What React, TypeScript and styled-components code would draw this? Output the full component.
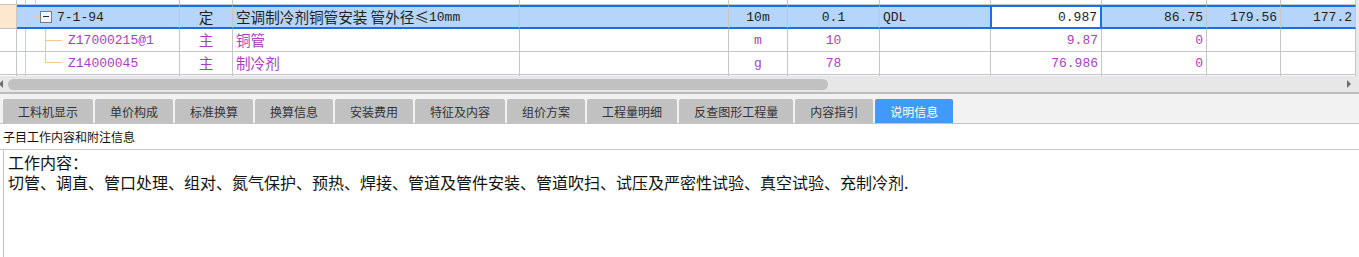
import React from "react";
import styled, { createGlobalStyle, css } from "styled-components";

const GlobalStyle = createGlobalStyle`
  html, body {
    margin: 0;
    padding: 0;
    background: #ffffff;
  }

  body {
    font-family: "Noto Sans CJK SC", sans-serif;
  }
`;

const COLUMNS =
  "17px 163px 53px 287px 209px 59px 92px 111px 111px 105px 74px 1fr";

const BLUE = "#1a6fe8";
const LINE = "#c6c6c6";
const PURPLE = "#a83fc2";
const TREE = "#f8c68a";

const TABS = [
  "工料机显示",
  "单价构成",
  "标准换算",
  "换算信息",
  "安装费用",
  "特征及内容",
  "组价方案",
  "工程量明细",
  "反查图形工程量",
  "内容指引",
  "说明信息",
];

type Align = "left" | "center" | "right";

export default function App() {
  return (
    <>
      <GlobalStyle />
      <Page>
        <GridViewport>
          <GridBody>
            {/* row scrolled mostly out of view */}
            <Row $height={23}>
              <RowHead />
              <Cell>
                <VLine $x={8} $top={0} $bottom={0} />
                <VLine $x={18} $top={0} $bottom={0} />
              </Cell>
              <Cell />
              <Cell />
              <Cell />
              <Cell />
              <Cell />
              <Cell />
              <Cell />
              <Cell />
              <Cell />
              <Cell />
            </Row>

            <Row $height={24} $background="#b5d5fa">
              <RowHead $current />
              <Cell $selected $pad={23}>
                <VLine $x={8} $top={-2} $bottom={-2} />
                <VLine $x={18} $top={-2} $height={11} />
                <HLine $x={18} $y={9} $width={5} />
                <Toggle />
                <span>7-1-94</span>
              </Cell>
              <Cell $selected $align="center">
                <Cjk>定</Cjk>
              </Cell>
              <Cell $selected $gap={0}>
                <Cjk>空调制冷剂铜管安装 管外径≤</Cjk>10mm
              </Cell>
              <Cell $selected />
              <Cell $selected $align="center">
                10m
              </Cell>
              <Cell $selected $align="center">
                0.1
              </Cell>
              <Cell $selected>QDL</Cell>
              <ActiveCell $selected $align="right">
                0.987
              </ActiveCell>
              <Cell $selected $align="right">
                86.75
              </Cell>
              <Cell $selected $align="right">
                179.56
              </Cell>
              <Cell $selected $align="right">
                177.2
              </Cell>
            </Row>

            <Row $height={23}>
              <RowHead />
              <Cell $tone="child" $pad={51}>
                <VLine $x={8} $top={0} $bottom={-1} />
                <VLine $x={28} $top={0} $bottom={-1} />
                <HLine $x={28} $y={11} $width={17} />
                Z17000215@1
              </Cell>
              <Cell $tone="child" $align="center">
                <Cjk>主</Cjk>
              </Cell>
              <Cell $tone="child">
                <Cjk>铜管</Cjk>
              </Cell>
              <Cell />
              <Cell $tone="child" $align="center">
                m
              </Cell>
              <Cell $tone="child" $align="center">
                10
              </Cell>
              <Cell />
              <Cell $tone="child" $align="right">
                9.87
              </Cell>
              <Cell $tone="child" $align="right">
                0
              </Cell>
              <Cell />
              <Cell />
            </Row>

            <Row $height={23}>
              <RowHead />
              <Cell $tone="child" $pad={51}>
                <VLine $x={8} $top={0} $bottom={-1} />
                <VLine $x={28} $top={0} $height={11} />
                <HLine $x={28} $y={10} $width={17} />
                Z14000045
              </Cell>
              <Cell $tone="child" $align="center">
                <Cjk>主</Cjk>
              </Cell>
              <Cell $tone="child">
                <Cjk>制冷剂</Cjk>
              </Cell>
              <Cell />
              <Cell $tone="child" $align="center">
                g
              </Cell>
              <Cell $tone="child" $align="center">
                78
              </Cell>
              <Cell />
              <Cell $tone="child" $align="right">
                76.986
              </Cell>
              <Cell $tone="child" $align="right">
                0
              </Cell>
              <Cell />
              <Cell />
            </Row>

            <Row $height={23} $background="#f3f7fd">
              <RowHead />
              <Cell>
                <VLine $x={8} $top={0} $bottom={0} />
              </Cell>
              <Cell />
              <Cell />
              <Cell />
              <Cell />
              <Cell />
              <Cell />
              <Cell />
              <Cell />
              <Cell />
              <Cell />
            </Row>
          </GridBody>
          <RightStrip />
        </GridViewport>

        <ScrollTrack>
          <ArrowLeft />
          <Thumb />
          <ArrowRight />
        </ScrollTrack>

        <TabBar>
          {TABS.map((tab, i) => (
            <Tab key={tab} $active={i === TABS.length - 1}>
              {tab}
            </Tab>
          ))}
        </TabBar>

        <InfoLabel>子目工作内容和附注信息</InfoLabel>

        <InfoBody>
          <p>工作内容：</p>
          <p>
            切管、调直、管口处理、组对、氮气保护、预热、焊接、管道及管件安装、管道吹扫、试压及严密性试验、真空试验、充制冷剂.
          </p>
        </InfoBody>
      </Page>
    </>
  );
}

const Page = styled.div`
  width: 1359px;
  height: 257px;
  overflow: hidden;

  display: flex;
  flex-direction: column;

  background: #ffffff;
`;

const GridViewport = styled.div`
  height: 76px;
  flex: none;
  overflow: hidden;

  display: flex;
`;

const GridBody = styled.div`
  flex: 1;
  margin-top: -18px;
`;

const RightStrip = styled.div`
  width: 3px;
  background: #e9e9e9;
`;

const Row = styled.div<{ $height: number; $background?: string }>`
  display: grid;
  grid-template-columns: ${COLUMNS};

  height: ${({ $height }) => $height}px;

  background: ${({ $background }) => $background || "#ffffff"};
`;

const RowHead = styled.div<{ $current?: boolean }>`
  box-sizing: border-box;

  border-right: 1px solid ${LINE};
  border-bottom: 1px solid ${LINE};

  background: ${({ $current }) => ($current ? "#fde7ce" : "#ffffff")};
`;

const Cell = styled.div<{
  $align?: Align;
  $selected?: boolean;
  $tone?: "child";
  $pad?: number;
  $gap?: number;
}>`
  position: relative;
  box-sizing: border-box;
  min-width: 0;

  display: flex;
  align-items: center;
  justify-content: ${({ $align }) =>
    $align === "right"
      ? "flex-end"
      : $align === "center"
      ? "center"
      : "flex-start"};
  gap: ${({ $gap }) => ($gap !== undefined ? $gap : 5)}px;

  padding: 0 3px 0 ${({ $pad }) => ($pad !== undefined ? $pad : 3)}px;

  border-right: 1px solid ${LINE};
  border-bottom: 1px solid ${LINE};

  overflow: hidden;
  white-space: pre;

  font-family: "Liberation Mono", "Noto Sans CJK SC", monospace;
  font-size: 13px;
  line-height: 1;
  color: ${({ $tone }) => ($tone === "child" ? PURPLE : "#1f1f1f")};

  ${({ $selected }) =>
    $selected &&
    css`
      border-top: 2px solid ${BLUE};
      border-bottom: 2px solid ${BLUE};
    `}
`;

const ActiveCell = styled(Cell)`
  background: #ffffff;

  border-right: 2px solid ${BLUE};
  box-shadow: -1px 0 0 ${BLUE}, inset 1px 0 0 ${BLUE};
`;

const Cjk = styled.span`
  font-family: "Noto Sans CJK SC", sans-serif;
  font-size: 14.6px;
  line-height: 1;
`;

const VLine = styled.span<{
  $x: number;
  $top: number;
  $bottom?: number;
  $height?: number;
}>`
  position: absolute;
  left: ${({ $x }) => $x}px;
  top: ${({ $top }) => $top}px;
  ${({ $bottom }) => ($bottom !== undefined ? `bottom: ${$bottom}px;` : "")}
  ${({ $height }) => ($height !== undefined ? `height: ${$height}px;` : "")}

  width: 1px;
  background: ${TREE};
`;

const HLine = styled.span<{ $x: number; $y: number; $width: number }>`
  position: absolute;
  left: ${({ $x }) => $x}px;
  top: ${({ $y }) => $y}px;

  width: ${({ $width }) => $width}px;
  height: 1px;
  background: ${TREE};
`;

const Toggle = styled.span`
  position: relative;
  box-sizing: border-box;
  flex: none;

  width: 12px;
  height: 12px;

  border: 1px solid #7c7c7c;
  background: #eef5ff;

  &::after {
    content: "";
    position: absolute;
    left: 2px;
    top: 4px;

    width: 6px;
    height: 1px;
    background: #2a2a2a;
  }
`;

const ScrollTrack = styled.div`
  height: 16px;
  flex: none;

  display: flex;
  align-items: center;

  padding-right: 8px;

  background: #e7e7e7;
  border-bottom: 2px solid #bababa;
`;

const ArrowLeft = styled.span`
  width: 0;
  height: 0;
  margin-left: -1px;

  border-top: 4px solid transparent;
  border-bottom: 4px solid transparent;
  border-right: 4px solid #6e6e6e;
`;

const Thumb = styled.span`
  width: 820px;
  height: 11px;
  margin-left: 5px;

  border-radius: 6px;
  background: #c1c1c1;
`;

const ArrowRight = styled.span`
  width: 0;
  height: 0;
  margin-left: auto;

  border-top: 4px solid transparent;
  border-bottom: 4px solid transparent;
  border-left: 4px solid #6e6e6e;
`;

const TabBar = styled.div`
  box-sizing: border-box;
  height: 30px;
  flex: none;

  display: flex;
  align-items: flex-end;
  gap: 2px;

  padding: 5px 0 0 3px;

  background: #f2f2f2;
  border-bottom: 1px solid #c4c4c4;
`;

const Tab = styled.div<{ $active?: boolean }>`
  height: 24px;

  display: flex;
  align-items: center;

  padding: 0 15px;

  border-radius: 2px 2px 0 0;

  font-size: 12px;
  color: ${({ $active }) => ($active ? "#ffffff" : "#333333")};
  background: ${({ $active }) => ($active ? "#4299fc" : "#c1c1c1")};
`;

const InfoLabel = styled.div`
  box-sizing: border-box;
  height: 26px;
  flex: none;

  display: flex;
  align-items: center;

  padding-left: 3px;

  border-bottom: 1px solid #c8c8c8;

  font-size: 12px;
  color: #111111;
`;

const InfoBody = styled.div`
  flex: 1;

  margin-left: 3px;
  padding: 2px 4px;

  border-left: 1px solid #c4c4c4;

  font-size: 16px;
  line-height: 20px;
  color: #111111;

  p {
    margin: 0;
    white-space: nowrap;
  }
`;
